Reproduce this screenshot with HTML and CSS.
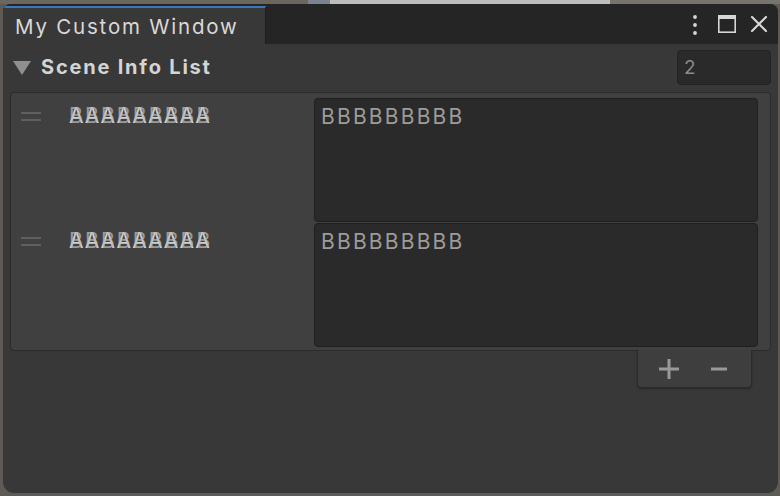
FILE: index.html
```html
<!DOCTYPE html>
<html lang="en">
<head>
    <meta charset="UTF-8">
    <title>My Custom Window</title>
    <link rel="stylesheet" href="styles.css">
</head>
<body>

<div class="frame-top">
    <div class="strip-a"></div>
    <div class="strip-b"></div>
    <div class="strip-c"></div>
    <div class="strip-d"></div>
</div>

<div class="editor-window">
    <div class="tab-bar">
        <div class="tab active">My Custom Window</div>
        <div class="tab-tools">
            <svg class="tool kebab" width="10" height="22" viewBox="0 0 10 22">
                <circle cx="5" cy="3" r="1.9" fill="#d6d6d6"/>
                <circle cx="5" cy="11" r="1.9" fill="#d6d6d6"/>
                <circle cx="5" cy="19" r="1.9" fill="#d6d6d6"/>
            </svg>
            <svg class="tool" width="20" height="20" viewBox="0 0 20 20">
                <rect x="1.8" y="1.8" width="16.4" height="16.4" fill="none" stroke="#d6d6d6" stroke-width="1.6"/>
                <rect x="1.8" y="1.8" width="16.4" height="3.2" fill="#d6d6d6"/>
            </svg>
            <svg class="tool" width="18" height="18" viewBox="0 0 18 18">
                <path d="M2 2 L16 16 M16 2 L2 16" stroke="#d6d6d6" stroke-width="2.2" stroke-linecap="round"/>
            </svg>
        </div>
    </div>

    <div class="content">
        <div class="foldout-row">
            <span class="foldout-arrow"></span>
            <span class="foldout-title">Scene Info List</span>
            <div class="size-field">2</div>
        </div>

        <div class="reorderable-list">
            <div class="list-element">
                <div class="drag-handle"><span></span><span></span></div>
                <div class="element-label">
                    <span class="label-a">AAAAAAAAA</span>
                    <span class="label-b">BBBBBBBBB</span>
                </div>
                <div class="text-area">BBBBBBBBB</div>
            </div>
            <div class="list-element">
                <div class="drag-handle"><span></span><span></span></div>
                <div class="element-label">
                    <span class="label-a">AAAAAAAAA</span>
                    <span class="label-b">BBBBBBBBB</span>
                </div>
                <div class="text-area">BBBBBBBBB</div>
            </div>
        </div>

        <div class="list-footer">
            <div class="footer-buttons">
                <svg width="20" height="20" viewBox="0 0 20 20">
                    <path d="M10 0 V20 M0 10 H20" stroke="#999" stroke-width="3"/>
                </svg>
                <svg width="16" height="20" viewBox="0 0 16 20">
                    <path d="M0 10 H16" stroke="#999" stroke-width="3"/>
                </svg>
            </div>
        </div>
    </div>
</div>

</body>
</html>
```

FILE: styles.css
```css
html, body {
    height: 100%;
}

body {
    margin: 0;
    padding: 0;
    background-color: #5e5b56;
    font-family: Inter, "Noto Sans", sans-serif;
    color: #d2d2d2;
    overflow: hidden;
}

.frame-top {
    display: flex;
    height: 4px;
}

.strip-a {
    width: 308px;
    background-color: #6b665e;
}

.strip-b {
    width: 22px;
    background-color: #7b8290;
}

.strip-c {
    width: 280px;
    background-color: #bdbdbd;
}

.strip-d {
    flex: 1;
    background-color: #77736d;
}

.editor-window {
    margin: 0 2px 0 3px;
    height: 489px;
    background-color: #383838;
    border-radius: 8px 8px 11px 11px;
    overflow: hidden;
    display: flex;
    flex-direction: column;
}

/* tab bar */
.tab-bar {
    display: flex;
    align-items: stretch;
    height: 40px;
    background-color: #252525;
}

.tab {
    width: 263px;
    margin-top: 2px;
    padding: 6px 0 0 12px;
    box-sizing: border-box;
    background-color: #383838;
    border-top: 2px solid #3a79bb;
    border-right: 1px solid #1e1e1e;
    font-size: 20.5px;
    letter-spacing: 1.8px;
    color: #d8d8d8;
}

.tab-tools {
    margin-left: auto;
    display: flex;
    align-items: center;
    gap: 13px;
    padding-right: 10px;
}

.tab-tools .kebab {
    margin-right: 4px;
    margin-top: 1px;
}

/* content */
.content {
    flex: 1;
    padding: 0 7px;
}

.foldout-row {
    display: flex;
    align-items: center;
    height: 46px;
}

.foldout-arrow {
    width: 0;
    height: 0;
    margin: 2px 0 0 3px;
    border-left: 9px solid transparent;
    border-right: 9px solid transparent;
    border-top: 14px solid #8f8f8f;
}

.foldout-title {
    margin-left: 10px;
    font-size: 20px;
    font-weight: bold;
    letter-spacing: 1.8px;
    color: #d4d4d4;
}

.size-field {
    margin-left: auto;
    width: 94px;
    height: 35px;
    box-sizing: border-box;
    padding: 5px 0 0 6px;
    background-color: #2a2a2a;
    border: 1px solid #232323;
    border-radius: 4px;
    font-size: 19px;
    color: #8c8c8c;
}

.reorderable-list {
    margin-top: 2px;
    padding: 5px 12px 2px 0;
    background-color: #404040;
    border: 1px solid #2b2b2b;
    border-radius: 4px;
}

.list-element {
    display: flex;
    height: 125px;
}

.drag-handle {
    width: 20px;
    padding: 14px 0 0 10px;
    display: flex;
    flex-direction: column;
    gap: 5px;
}

.drag-handle span {
    height: 2px;
    background-color: #5f5f5f;
}

.element-label {
    position: relative;
    width: 245px;
    margin-left: 28px;
    padding-top: 5px;
    font-size: 21px;
    letter-spacing: 1px;
    color: #d0d0d0;
}

.label-b {
    position: absolute;
    left: 0;
    top: 5px;
    letter-spacing: 2.2px;
    color: #b8b8b8;
    opacity: 0.75;
}

.text-area {
    flex: 1;
    box-sizing: border-box;
    margin-bottom: 1px;
    padding: 5px 0 0 6px;
    background-color: #2a2a2a;
    border: 1px solid #1f1f1f;
    border-radius: 4px;
    font-size: 21px;
    letter-spacing: 2.2px;
    color: #9c9c9c;
}

.list-footer {
    display: flex;
    justify-content: flex-end;
    padding-right: 19px;
}

.footer-buttons {
    display: flex;
    align-items: center;
    justify-content: center;
    gap: 32px;
    width: 115px;
    height: 38px;
    box-sizing: border-box;
    padding-right: 4px;
    margin-top: -1px;
    background-color: #3e3e3e;
    border: 1px solid #2b2b2b;
    border-top: none;
    border-radius: 0 0 4px 4px;
    box-shadow: 0 1px 2px rgba(0, 0, 0, 0.3);
}
```
